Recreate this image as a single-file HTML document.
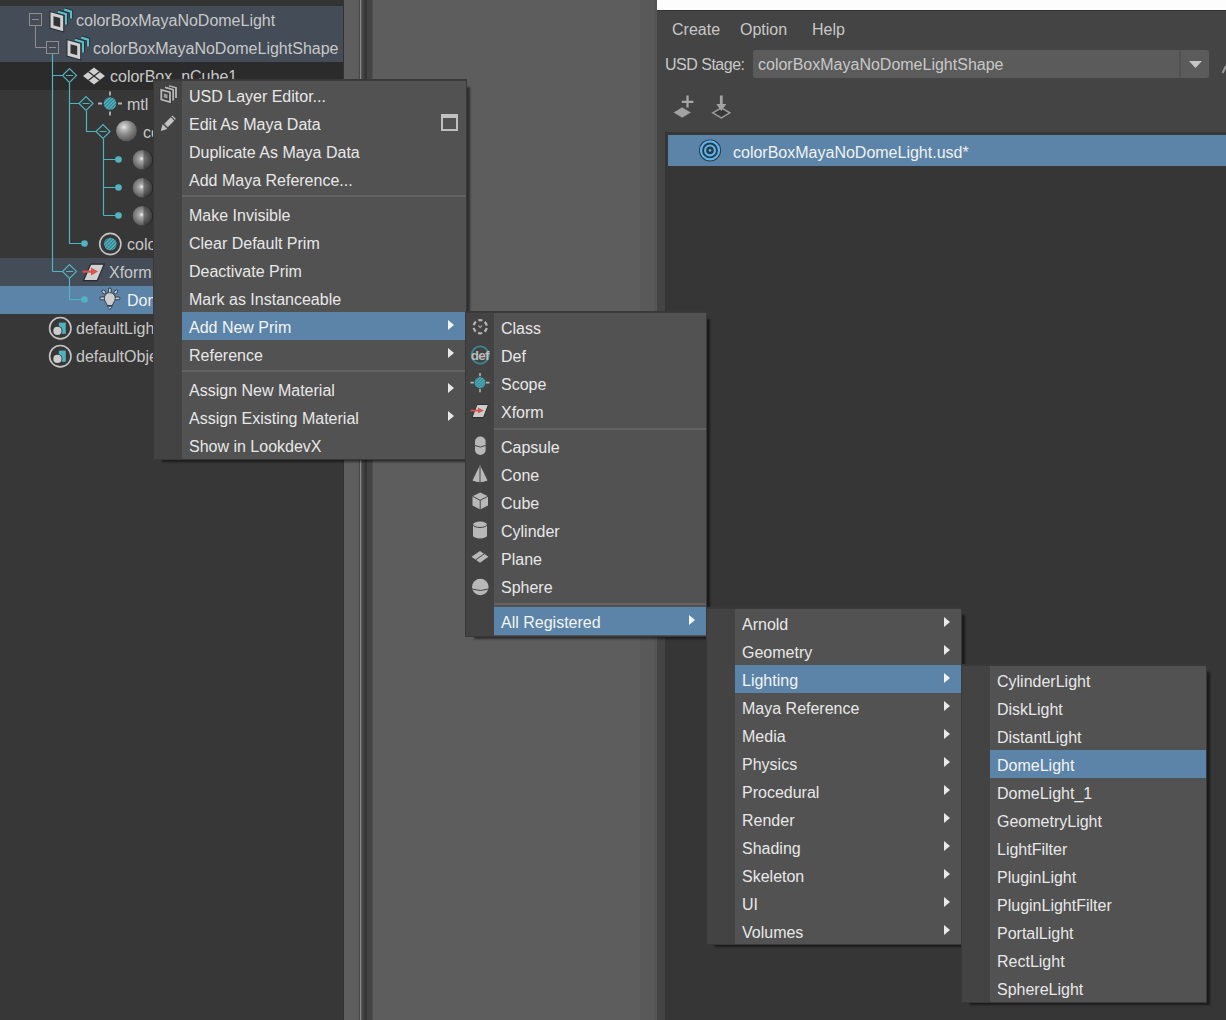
<!DOCTYPE html>
<html><head><meta charset="utf-8"><style>
*{margin:0;padding:0;box-sizing:border-box}
html,body{width:1226px;height:1020px;overflow:hidden}
body{position:relative;background:#5d5d5d;font-family:"Liberation Sans",sans-serif;font-size:16px;color:#c8c8c8}
.a{position:absolute}
.t{position:absolute;white-space:nowrap;line-height:28px;height:28px}
.menu{position:absolute;background:#525252;border:1px solid #383838;box-shadow:6px 5px 2px -3px rgba(0,0,0,0.5)}
.menu:before{content:"";position:absolute;left:0;right:0;top:0;height:1px;background:#3a3a3a;z-index:1}
.menu .ic{position:absolute;left:0;top:0;bottom:0;width:28px;background:#434343}
.menu .t{color:#e8e8e8;margin-top:1px}
.hl{position:absolute;background:#5b84a8}
.sep{position:absolute;height:2px;background:#636363}
.arr{position:absolute;width:0;height:0;border-top:5px solid transparent;border-bottom:5px solid transparent;border-left:6px solid #e8e8e8}
.sh{position:absolute;background:rgba(0,0,0,0.45)}
</style></head><body>

<!-- Outliner -->
<div class="a" style="left:0;top:0;width:343px;height:1020px;background:#373737"></div>
<div class="a" style="left:0;top:0;width:343px;height:6px;background:#333333"></div>
<div class="a" style="left:0;top:6px;width:343px;height:56px;background:#434c57"></div>
<div class="a" style="left:0;top:62px;width:343px;height:28px;background:#2b2b2b"></div>
<div class="a" style="left:0;top:258px;width:343px;height:28px;background:#434c57"></div>
<div class="a" style="left:0;top:286px;width:343px;height:28px;background:#5b84a8"></div>

<div class="t" style="left:76px;top:7px">colorBoxMayaNoDomeLight</div>
<div class="t" style="left:93px;top:35px">colorBoxMayaNoDomeLightShape</div>
<div class="t" style="left:110px;top:63px">colorBox_nCube1</div>
<div class="t" style="left:127px;top:91px">mtl</div>
<div class="t" style="left:143px;top:119px">colorBox</div>
<div class="t" style="left:127px;top:231px">colorBox</div>
<div class="t" style="left:109px;top:259px">Xform</div>
<div class="t" style="left:127px;top:287px;color:#f2f2f2">DomeLight</div>
<div class="t" style="left:76px;top:315px">defaultLightSet</div>
<div class="t" style="left:76px;top:343px">defaultObjectSet</div>


<svg class="a" style="left:0;top:0" width="343" height="380" viewBox="0 0 343 380">
<defs>
<radialGradient id="sph1" cx="0.38" cy="0.32" r="0.78"><stop offset="0" stop-color="#ececec"/><stop offset="0.14" stop-color="#c4c4c4"/><stop offset="0.45" stop-color="#8c8c8c"/><stop offset="0.85" stop-color="#5c5c5c"/><stop offset="1" stop-color="#404040"/></radialGradient>
<radialGradient id="sph2" cx="0.45" cy="0.45" r="0.6"><stop offset="0" stop-color="#f4f4f4"/><stop offset="0.2" stop-color="#a8a8a8"/><stop offset="0.75" stop-color="#6a6a6a"/><stop offset="1" stop-color="#505050"/></radialGradient>
<pattern id="hatch" width="2.5" height="2.5" patternUnits="userSpaceOnUse" patternTransform="rotate(45)"><rect width="2.5" height="2.5" fill="#4fb0bf"/><rect width="0.9" height="2.5" fill="#2f7480"/></pattern>
<linearGradient id="half" x1="0" x2="1"><stop offset="0.5" stop-color="#000" stop-opacity="0"/><stop offset="0.5" stop-color="#000" stop-opacity="0.35"/></linearGradient>
</defs>
<g fill="none" stroke="#8e8e8e" stroke-width="1">
<rect x="29.5" y="13.5" width="12" height="12"/><path d="M32 19.5H39M35.5 26V47.5H46"/>
<rect x="46.5" y="41.5" width="12" height="12"/><path d="M49 47.5H56"/>
</g>
<g fill="none" stroke="#52b3c0" stroke-width="1.2">
<path d="M52.5 54V271.5M52.5 75.5H62.5M69.5 83V243.5H84M69.5 103.5H79M86.5 111V131.5H96M103.5 139V215.5M103.5 159.5H118M103.5 187.5H118M103.5 215.5H118M52.5 271.5H62.5M69.5 279V299.5H84"/>
<path d="M62.5 75.5L69.5 68.5L76.5 75.5L69.5 82.5Z M66 75.5H73"/>
<path d="M79 103.5L86 96.5L93 103.5L86 110.5Z M82.5 103.5H89.5"/>
<path d="M96 131.5L103 124.5L110 131.5L103 138.5Z M99.5 131.5H106.5"/>
<path d="M62.5 271.5L69.5 264.5L76.5 271.5L69.5 278.5Z M66 271.5H73"/>
</g>
<g fill="#52b3c0"><circle cx="118.5" cy="159.5" r="3.3"/><circle cx="118.5" cy="187.5" r="3.3"/><circle cx="118.5" cy="215.5" r="3.3"/><circle cx="84.5" cy="243.5" r="3.3"/><circle cx="84.5" cy="299.5" r="3.3"/></g>
<!-- stage icons -->
<g id="stg">
<path d="M64.3 9.6L71 11.6V18.6" fill="none" stroke="#2a2f36" stroke-width="4.2"/>
<path d="M64.3 9.6L71 11.6V18.6" fill="none" stroke="#5bbfca" stroke-width="2.2"/>
<path d="M57.8 11.8L65.9 14.1V24.6" fill="none" stroke="#2a2f36" stroke-width="4.2"/>
<path d="M57.8 11.8L65.9 14.1V24.6" fill="none" stroke="#5bbfca" stroke-width="2.2"/>
<path d="M52 14.3L61.7 16.9V29.2L52 26.5Z" fill="#2e2e2e" stroke="#262a30" stroke-width="5"/>
<path d="M52 14.3L61.7 16.9V29.2L52 26.5Z" fill="#333" stroke="#d0d0d0" stroke-width="3"/>
</g>
<use href="#stg" x="17" y="28"/>
<!-- 4-diamond -->
<path d="M83 76L94 67.5L105 76L94 84.5Z" fill="#d0d0d0"/>
<path d="M88.5 71.75L99.5 80.25M99.5 71.75L88.5 80.25" stroke="#2b2b2b" stroke-width="1.2"/>
<!-- scope -->
<circle cx="110" cy="103.5" r="6.3" fill="url(#hatch)"/>
<path d="M98 103.5H102M118 103.5H122M110 91.5V95.5M110 111.5V115.5" stroke="#b4b4b4" stroke-width="1.8"/>
<!-- spheres -->
<circle cx="126.5" cy="130.8" r="10.4" fill="url(#sph1)"/>
<g><circle cx="142.5" cy="159.7" r="9.8" fill="url(#sph2)"/><path d="M143.5 149.9A9.8 9.8 0 0 1 143.5 169.5Z" fill="#000" opacity="0.3"/></g>
<g><circle cx="142.5" cy="187.7" r="9.8" fill="url(#sph2)"/><path d="M143.5 177.9A9.8 9.8 0 0 1 143.5 197.5Z" fill="#000" opacity="0.3"/></g>
<g><circle cx="142.5" cy="215.7" r="9.8" fill="url(#sph2)"/><path d="M143.5 205.9A9.8 9.8 0 0 1 143.5 225.5Z" fill="#000" opacity="0.3"/></g>
<!-- material ring -->
<circle cx="110.3" cy="244" r="10.6" fill="none" stroke="#c4c4c4" stroke-width="1.6"/>
<circle cx="110.3" cy="244" r="6.3" fill="url(#hatch)"/>
<!-- xform -->
<path d="M90.7 264.2H104.2L97.2 280.7H83.4Z" fill="#d0d0d0" stroke="#26292e" stroke-width="1.2"/>
<path d="M82.5 271.6H92" stroke="#d9534f" stroke-width="2.2"/>
<path d="M91 267.5L98 271.5L91 275.5Z" fill="#d9534f"/>
<!-- bulb -->
<g stroke="#2a3a48" stroke-width="3.6" stroke-linecap="round"><path d="M109.8 289.3V291.5M101.2 298.4H103.3M116.4 298.4H118.6M103.2 291.3L104.4 292.5M116.4 291.3L115.2 292.5"/></g>
<path d="M109.8 292.6C106.3 292.6 104.3 295.3 104.3 298.3C104.3 301 106.4 302.8 107.3 305.5H112.3C113.2 302.8 115.3 301 115.3 298.3C115.3 295.3 113.3 292.6 109.8 292.6Z" fill="#cdcdcd" stroke="#2a3a48" stroke-width="1"/>
<path d="M107.3 306.3H112.3L109.8 309.6Z" fill="#cdcdcd" stroke="#2a3a48" stroke-width="0.8"/>
<g stroke="#cdcdcd" stroke-width="1.8" stroke-linecap="round"><path d="M109.8 289.3V291.5M101.2 298.4H103.3M116.4 298.4H118.6M103.2 291.3L104.4 292.5M116.4 291.3L115.2 292.5"/></g>
<!-- set icons -->
<g id="seti">
<circle cx="60.3" cy="328.2" r="10.7" fill="none" stroke="#c4c4c4" stroke-width="1.6"/>
<rect x="58.8" y="322.6" width="7" height="11.2" fill="#4fb0bf"/>
<circle cx="57.4" cy="330.9" r="5" fill="#373737"/>
<circle cx="57.4" cy="330.9" r="4.1" fill="#cccccc"/>
</g>
<use href="#seti" x="0" y="28"/>
</svg>

<!-- splitter strips -->
<div class="a" style="left:343px;top:0;width:31px;height:1020px;background:linear-gradient(to right,#333333 0px 1px,#5e5e5e 1px 15px,#585858 15px 16px,#4a4a4a 16px 17px,#858585 17px 18px,#5a5a5a 18px 19px,#424242 19px 21px,#3a3a3a 21px 22px,#353535 22px 24px,#444444 24px 29px,#505050 29px 30px,#5d5d5d 30px 31px)"></div>
<!-- right panel -->
<div class="a" style="left:640px;top:0;width:14px;height:1020px;background:#595959"></div>
<div class="a" style="left:654px;top:0;width:3px;height:1020px;background:#555"></div>
<div class="a" style="left:657px;top:0;width:569px;height:10px;background:#fdfdfd"></div>
<div class="a" style="left:657px;top:10px;width:569px;height:1px;background:#333"></div>
<div class="a" style="left:657px;top:11px;width:569px;height:1009px;background:#444444"></div>
<div class="t" style="left:672px;top:15.5px">Create</div>
<div class="t" style="left:740px;top:15.5px">Option</div>
<div class="t" style="left:812px;top:15.5px">Help</div>
<div class="t" style="left:665px;top:51px;letter-spacing:-0.5px">USD Stage:</div>
<div class="a" style="left:753px;top:50px;width:456px;height:28px;background:#5b5b5b;border-radius:3px"></div>
<div class="a" style="left:1179px;top:50px;width:2px;height:28px;background:#525252"></div>
<svg class="a" style="left:657px;top:50px" width="569" height="120" viewBox="657 50 569 120">
 <path d="M1189 61H1202L1195.5 68Z" fill="#c6c6c6"/>
 <path d="M1222.5 73L1226 66" stroke="#9a9a9a" stroke-width="2"/>
 <path d="M673 112.5L682.2 107L691.4 112.5L682.2 118Z" fill="#a2a2a2" stroke="#3a3a3a" stroke-width="0.6"/>
 <path d="M687.5 95.5V107.5M681.8 101.8H693.4" stroke="#a6a6a6" stroke-width="2.3"/>
 <path d="M712.8 112.8L721.3 107.8L729.8 112.8L721.3 117.8Z" fill="#383838" stroke="#9c9c9c" stroke-width="1.5"/>
 <path d="M721.3 95.5V106" stroke="#a2a2a2" stroke-width="2.8"/>
 <path d="M716.3 104H726.3L721.3 111Z" fill="#a2a2a2"/>
</svg>
<div class="t" style="left:758px;top:51px">colorBoxMayaNoDomeLightShape</div>
<div class="a" style="left:665px;top:132px;width:561px;height:888px;background:#363636"></div>
<div class="a" style="left:668px;top:135px;width:558px;height:31px;background:#5b84a8"></div>
<div class="t" style="left:733px;top:139px;color:#f2f2f2">colorBoxMayaNoDomeLight.usd*</div>
<svg class="a" style="left:696px;top:136px" width="28" height="29" viewBox="696 136 28 29">
 <circle cx="710" cy="150.4" r="11" fill="#2c3844"/>
 <circle cx="710" cy="150.4" r="9" fill="none" stroke="#5bb5ee" stroke-width="2.2"/>
 <circle cx="710" cy="150.4" r="4.9" fill="none" stroke="#5bb5ee" stroke-width="2.2"/>
 <circle cx="710" cy="150.4" r="1.3" fill="#5bb5ee"/>
</svg>

<!-- Menu 1 -->
<div class="menu" style="left:153px;top:79px;width:314px;height:381px">
  <div class="ic"></div>

  <svg class="a" style="left:0;top:0" width="312" height="60" viewBox="154 80 312 60">
   <g fill="none" stroke-linejoin="miter">
    <path d="M169 86.2L176 88V98" stroke="#b8b8b8" stroke-width="1.8"/>
    <path d="M165 87.4L173.2 89.6V100.5" stroke="#3a3a3a" stroke-width="3.6"/>
    <path d="M165 87.4L173.2 89.6V100.5" stroke="#b8b8b8" stroke-width="1.8"/>
    <path d="M161.3 89.8L170 92.2V102L161.3 99.6Z" stroke="#3a3a3a" stroke-width="3.6" fill="#444"/>
    <path d="M161.3 89.8L170 92.2V102L161.3 99.6Z" stroke="#b8b8b8" stroke-width="1.8"/>
    <path d="M163.8 93.5L167.5 94.5V98.5L163.8 97.5Z" fill="#9a9a9a"/>
   </g>
   <path d="M165.5 126L174.2 117.3" stroke="#c2c2c2" stroke-width="4.8"/>
   <path d="M171.2 116.8L175.4 121" stroke="#444" stroke-width="1.1"/>
   <path d="M162.6 124.2L167.3 128.9L160.8 130.9Z" fill="#c2c2c2"/>
   <path d="M163.3 123L168.8 128.5" stroke="#444" stroke-width="1"/>
   <rect x="442" y="115" width="15" height="15" fill="none" stroke="#bdbdbd" stroke-width="2"/>
   <rect x="441" y="114" width="17" height="4" fill="#c2c2c2"/>
  </svg>
  <div class="t" style="left:35px;top:2px">USD Layer Editor...</div>
  <div class="t" style="left:35px;top:30px">Edit As Maya Data</div>
  <div class="t" style="left:35px;top:58px">Duplicate As Maya Data</div>
  <div class="t" style="left:35px;top:86px">Add Maya Reference...</div>
  <div class="sep" style="left:28px;right:0;top:115px"></div>
  <div class="t" style="left:35px;top:121px">Make Invisible</div>
  <div class="t" style="left:35px;top:149px">Clear Default Prim</div>
  <div class="t" style="left:35px;top:177px">Deactivate Prim</div>
  <div class="t" style="left:35px;top:205px">Mark as Instanceable</div>
  <div class="hl" style="left:28px;width:283px;top:232px;height:28px"></div>
  <div class="t" style="left:35px;top:233px;color:#f4f4f4">Add New Prim</div>
  <div class="arr" style="left:294px;top:240px;border-left-color:#f4f4f4"></div>
  <div class="t" style="left:35px;top:261px">Reference</div>
  <div class="arr" style="left:294px;top:268px"></div>
  <div class="sep" style="left:28px;right:0;top:290px"></div>
  <div class="t" style="left:35px;top:296px">Assign New Material</div>
  <div class="arr" style="left:294px;top:303px"></div>
  <div class="t" style="left:35px;top:324px">Assign Existing Material</div>
  <div class="arr" style="left:294px;top:331px"></div>
  <div class="t" style="left:35px;top:352px">Show in LookdevX</div>
</div>

<!-- Menu 2 -->
<div class="menu" style="left:465px;top:311px;width:242px;height:326px">
  <div class="ic"></div>

  <svg class="a" style="left:0;top:0" width="28" height="290" viewBox="466 312 28 290">
   <circle cx="480.2" cy="326.7" r="6.6" stroke="#b4b4b4" stroke-width="2.3" fill="none" stroke-dasharray="4.2 2.71" stroke-dashoffset="-1.35"/>
   <path d="M478.5 325.5L480.2 327.5L482 325.5" stroke="#9a9a9a" stroke-width="1.4" fill="none"/>
   <circle cx="480.2" cy="355" r="8.6" fill="none" stroke="#3a8a95" stroke-width="1.8"/>
   <text x="479.8" y="359.5" font-family="Liberation Sans" font-weight="bold" font-size="13.5" fill="#bcbcbc" text-anchor="middle" letter-spacing="-0.7">def</text>
   <defs><pattern id="hatch2" width="2.2" height="2.2" patternUnits="userSpaceOnUse" patternTransform="rotate(45)"><rect width="2.2" height="2.2" fill="#4aabb9"/><rect width="0.8" height="2.2" fill="#34808b"/></pattern></defs>
   <circle cx="480" cy="382.6" r="5.5" fill="url(#hatch2)"/>
   <path d="M470.5 382.6H473.8M486 382.6H489.5M480 373V376.3M480 388.8V392.3" stroke="#b4b4b4" stroke-width="1.6"/>
   <path d="M477 404.5H488.5L483.5 417.5H472Z" fill="#cccccc" stroke="#2f2f2f" stroke-width="1"/>
   <path d="M470.5 410.6H479" stroke="#d9534f" stroke-width="1.8"/>
   <path d="M478 407.6L483.8 410.6L478 413.6Z" fill="#d9534f"/>
   <g fill="#b8b8b8">
    <path d="M475 441.5A5.3 5 0 0 1 485.6 441.5V450A5.3 5 0 0 1 475 450Z"/>
    <path d="M480 465L472.5 480.5Q480 484 487.5 480.5Z"/>
    <path d="M480.2 492.5L488 496.3V505.5L480.2 509.5L472.5 505.5V496.3Z"/>
    <path d="M473 524.5A7 3 0 0 1 487 524.5V535.5A7 3 0 0 1 473 535.5Z"/>
    <path d="M480 551L488.5 556.8L480 562.8L471.5 556.8Z"/>
    <circle cx="480.3" cy="587" r="8.3"/>
   </g>
   <g stroke="#444" stroke-width="1" fill="none">
    <path d="M475 445.5Q480.3 448.5 485.6 445.5"/>
    <path d="M480 466V483"/>
    <path d="M472.5 496.3L480.2 500.3L488 496.3M480.2 500.3V509.5"/>
    <path d="M473 524.5A7 3 0 0 0 487 524.5"/>
    <path d="M475.8 559.8L484.3 553.8"/>
    <path d="M472 589Q480.3 592 488.6 589"/>
   </g>
  </svg>
  <div class="t" style="left:35px;top:2px">Class</div>
  <div class="t" style="left:35px;top:30px">Def</div>
  <div class="t" style="left:35px;top:58px">Scope</div>
  <div class="t" style="left:35px;top:86px">Xform</div>
  <div class="sep" style="left:28px;right:0;top:116px"></div>
  <div class="t" style="left:35px;top:121px">Capsule</div>
  <div class="t" style="left:35px;top:149px">Cone</div>
  <div class="t" style="left:35px;top:177px">Cube</div>
  <div class="t" style="left:35px;top:205px">Cylinder</div>
  <div class="t" style="left:35px;top:233px">Plane</div>
  <div class="t" style="left:35px;top:261px">Sphere</div>
  <div class="sep" style="left:28px;right:0;top:291px"></div>
  <div class="hl" style="left:28px;width:212px;top:295px;height:28px"></div>
  <div class="t" style="left:35px;top:296px;color:#f4f4f4">All Registered</div>
  <div class="arr" style="left:223px;top:303px;border-left-color:#f4f4f4"></div>
</div>

<!-- Menu 3 -->
<div class="menu" style="left:706px;top:607px;width:256px;height:338px">
  <div class="ic"></div>
  <div class="t" style="left:35px;top:2px">Arnold</div>
  <div class="t" style="left:35px;top:30px">Geometry</div>
  <div class="hl" style="left:28px;width:226px;top:57px;height:28px"></div>
  <div class="t" style="left:35px;top:58px;color:#f4f4f4">Lighting</div>
  <div class="t" style="left:35px;top:86px">Maya Reference</div>
  <div class="t" style="left:35px;top:114px">Media</div>
  <div class="t" style="left:35px;top:142px">Physics</div>
  <div class="t" style="left:35px;top:170px">Procedural</div>
  <div class="t" style="left:35px;top:198px">Render</div>
  <div class="t" style="left:35px;top:226px">Shading</div>
  <div class="t" style="left:35px;top:254px">Skeleton</div>
  <div class="t" style="left:35px;top:282px">UI</div>
  <div class="t" style="left:35px;top:310px">Volumes</div>
  <div class="arr" style="left:237px;top:9px"></div>
  <div class="arr" style="left:237px;top:37px"></div>
  <div class="arr" style="left:237px;top:65px;border-left-color:#f4f4f4"></div>
  <div class="arr" style="left:237px;top:93px"></div>
  <div class="arr" style="left:237px;top:121px"></div>
  <div class="arr" style="left:237px;top:149px"></div>
  <div class="arr" style="left:237px;top:177px"></div>
  <div class="arr" style="left:237px;top:205px"></div>
  <div class="arr" style="left:237px;top:233px"></div>
  <div class="arr" style="left:237px;top:261px"></div>
  <div class="arr" style="left:237px;top:289px"></div>
  <div class="arr" style="left:237px;top:317px"></div>
</div>

<!-- Menu 4 -->
<div class="menu" style="left:961px;top:664px;width:246px;height:339px">
  <div class="ic"></div>
  <div class="t" style="left:35px;top:2px">CylinderLight</div>
  <div class="t" style="left:35px;top:30px">DiskLight</div>
  <div class="t" style="left:35px;top:58px">DistantLight</div>
  <div class="hl" style="left:28px;width:216px;top:85px;height:28px"></div>
  <div class="t" style="left:35px;top:86px;color:#f4f4f4">DomeLight</div>
  <div class="t" style="left:35px;top:114px">DomeLight_1</div>
  <div class="t" style="left:35px;top:142px">GeometryLight</div>
  <div class="t" style="left:35px;top:170px">LightFilter</div>
  <div class="t" style="left:35px;top:198px">PluginLight</div>
  <div class="t" style="left:35px;top:226px">PluginLightFilter</div>
  <div class="t" style="left:35px;top:254px">PortalLight</div>
  <div class="t" style="left:35px;top:282px">RectLight</div>
  <div class="t" style="left:35px;top:310px">SphereLight</div>
</div>

</body></html>
